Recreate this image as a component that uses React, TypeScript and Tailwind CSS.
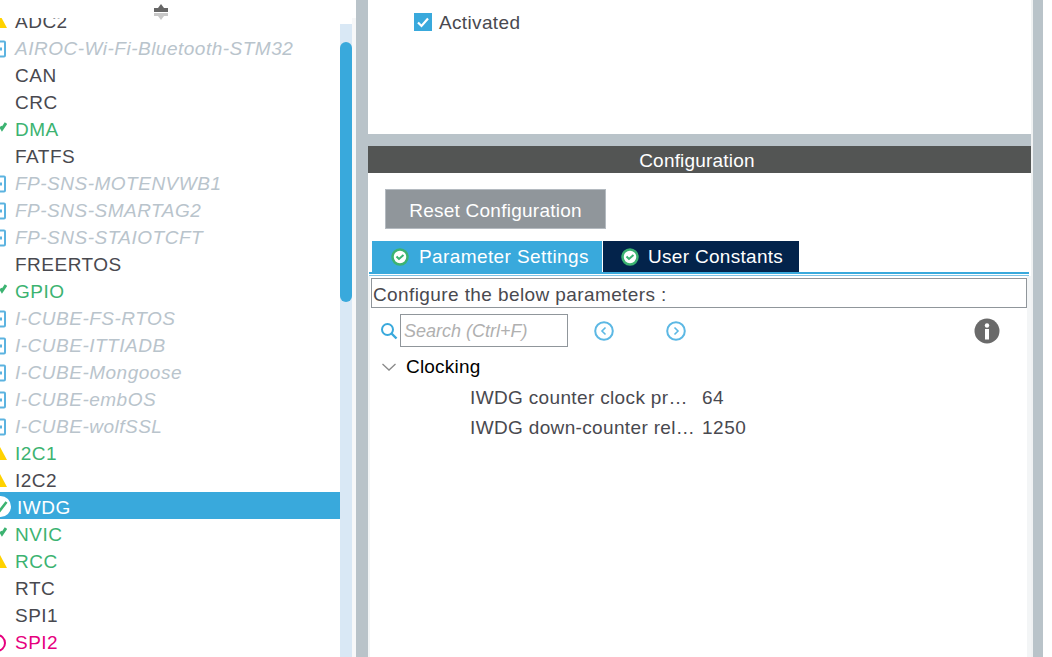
const rows = [
  { name: "AIROC-Wi-Fi-Bluetooth-STM32", kind: "pack" },
  { name: "CAN", kind: "plain" },
  { name: "CRC", kind: "plain" },
  { name: "DMA", kind: "ok" },
  { name: "FATFS", kind: "plain" },
  { name: "FP-SNS-MOTENVWB1", kind: "pack" },
  { name: "FP-SNS-SMARTAG2", kind: "pack" },
  { name: "FP-SNS-STAIOTCFT", kind: "pack" },
  { name: "FREERTOS", kind: "plain" },
  { name: "GPIO", kind: "ok" },
  { name: "I-CUBE-FS-RTOS", kind: "pack" },
  { name: "I-CUBE-ITTIADB", kind: "pack" },
  { name: "I-CUBE-Mongoose", kind: "pack" },
  { name: "I-CUBE-embOS", kind: "pack" },
  { name: "I-CUBE-wolfSSL", kind: "pack" },
  { name: "I2C1", kind: "warn" },
  { name: "I2C2", kind: "warnPlain" },
  { name: "IWDG", kind: "selected" },
  { name: "NVIC", kind: "ok" },
  { name: "RCC", kind: "warn" },
  { name: "RTC", kind: "plain" },
  { name: "SPI1", kind: "plain" },
  { name: "SPI2", kind: "error" },
];

function RowIcon({ kind }: { kind: string }) {
  if (kind === "pack") {
    return (
      <svg width="16" height="18" viewBox="0 0 16 18" className="shrink-0">
        <rect x="2" y="1.5" width="13" height="15" rx="1" fill="#fff" stroke="#5cb3e0" strokeWidth="2" />
        <rect x="9.5" y="7.5" width="2.5" height="3" fill="#5cb3e0" />
      </svg>
    );
  }
  if (kind === "ok") {
    return (
      <svg width="17" height="18" viewBox="0 0 17 18" className="shrink-0">
        <path d="M10.5 5.5 L12 8 L16 2" fill="none" stroke="#3cb371" strokeWidth="3" />
      </svg>
    );
  }
  if (kind === "warn" || kind === "warnPlain") {
    return (
      <svg width="17" height="18" viewBox="0 0 17 18" className="shrink-0">
        <path d="M9.5 1 L17 15 L2 15 Z" fill="#ffd200" />
      </svg>
    );
  }
  if (kind === "selected") {
    return (
      <svg width="21" height="23" viewBox="0 0 21 23" className="shrink-0">
        <circle cx="10.5" cy="10.5" r="10.5" fill="#fff" />
        <path d="M7 12 L9.5 15 L16.5 6" fill="none" stroke="#3cb371" strokeWidth="2.6" />
      </svg>
    );
  }
  if (kind === "error") {
    return (
      <svg width="16" height="20" viewBox="0 0 16 20" className="shrink-0">
        <circle cx="7" cy="10" r="8" fill="#fff" stroke="#e6007e" strokeWidth="2" />
      </svg>
    );
  }
  return <span className="w-[16px] shrink-0" />;
}

function rowText(kind: string) {
  if (kind === "pack") return "text-[#b9c4cc] italic";
  if (kind === "ok" || kind === "warn") return "text-[#3cb371]";
  if (kind === "error") return "text-[#e6007e]";
  if (kind === "selected") return "ml-[2px] text-white";
  return "text-[#49494f]";
}

function TabCheck() {
  return (
    <svg width="18" height="18" viewBox="0 0 18 18" className="shrink-0">
      <circle cx="9" cy="9" r="7.5" fill="#fff" stroke="#3cb371" strokeWidth="2.5" />
      <path d="M5.5 8.5 L8 11 L12.5 7" fill="none" stroke="#3cb371" strokeWidth="2" />
    </svg>
  );
}

function NavArrow({ dir }: { dir: "left" | "right" }) {
  return (
    <svg width="20" height="20" viewBox="0 0 20 20" className="shrink-0">
      <circle cx="10" cy="10" r="8.8" fill="none" stroke="#5cb8e4" strokeWidth="2" />
      <path d={dir === "left" ? "M11.5 6.5 L8 10 L11.5 13.5" : "M8.5 6.5 L12 10 L8.5 13.5"} fill="none" stroke="#5cb8e4" strokeWidth="1.6" />
    </svg>
  );
}

export default function App() {
  return (
    <div className="flex h-screen w-[1043px] overflow-hidden bg-[#b9c3c9] font-['Liberation_Sans',Arial,sans-serif] text-[19px] leading-[27px]">
      {/* peripheral list */}
      <div className="flex h-full w-[356px] shrink-0 flex-col bg-white">
        <div className="flex h-[18px] shrink-0 justify-center pt-[4px]">
          <svg width="14" height="17" viewBox="0 0 14 17" className="relative z-10 ml-[-34px] shrink-0">
            <path d="M7 0 L10 4 L14 4 L14 8 L0 8 L0 4 L4 4 Z" fill="#666" />
            <path d="M0 9 L14 9 L14 12 L10 12 L7 16 L4 12 L0 12 Z" fill="#c8c8c8" />
          </svg>
        </div>
        <div className="flex min-h-0 flex-1">
          <div className="min-w-0 flex-1 overflow-hidden">
            <div className="mt-[-12px]">
              <div className="flex h-[27px] items-center pt-[4px]">
                <div className="ml-[-10px] flex w-[25px] shrink-0">
                  <RowIcon kind="warn" />
                </div>
                <span className="text-[#49494f] tracking-[0.5px]">ADC2</span>
              </div>
              {rows.map((r) => (
                <div key={r.name} className={`flex h-[27px] items-center pt-[4px] ${r.kind === "selected" ? "bg-[#39a9dc]" : ""}`}>
                  <div className="ml-[-10px] flex w-[25px] shrink-0">
                    <RowIcon kind={r.kind} />
                  </div>
                  <span className={`${rowText(r.kind)} tracking-[0.5px] whitespace-nowrap`}>{r.name}</span>
                </div>
              ))}
            </div>
          </div>
          {/* scrollbar */}
          <div className="mt-[6px] w-[12px] shrink-0 bg-[#d9e8f5] pt-[18px]">
            <div className="h-[260px] rounded-[6px] bg-[#39a9dc]" />
          </div>
          <div className="w-[4px] shrink-0 bg-[#f7f8f9]" />
        </div>
      </div>

      <div className="w-[12px] shrink-0" />

      {/* right side */}
      <div className="flex h-full w-[663px] shrink-0 flex-col">
        <div className="flex h-[134px] shrink-0 items-start gap-[7px] bg-white pt-[9px] pl-[46px]">
          <div className="mt-[4px] flex h-[18px] w-[18px] items-center justify-center bg-[#39a9dc]">
            <svg width="14" height="14" viewBox="0 0 14 14">
              <path d="M2 7.5 L5.5 11 L12 3.5" fill="none" stroke="#fff" strokeWidth="2.2" />
            </svg>
          </div>
          <span className="text-[#49494f] tracking-[0.35px]">Activated</span>
        </div>
        <div className="h-[12px] shrink-0" />
        <div className="flex h-[27px] shrink-0 items-center justify-center bg-[#535554] pt-[2px] pr-[5px] text-white tracking-[0.2px]">
          Configuration
        </div>
        <div className="flex min-h-0 flex-1 flex-col bg-white">
          <div className="pt-[16px] pl-[17px]">
            <div className="flex h-[40px] w-[221px] items-center justify-center border border-[#b4bac0] bg-[#90969b] pt-[2px] text-white tracking-[0.25px]">
              Reset Configuration
            </div>
          </div>
          <div className="mt-[12px] ml-[4px] flex h-[31px] gap-[1px]">
            <div className="flex w-[230px] items-center gap-[10px] bg-[#39a9dc] pl-[19px] text-white tracking-[0.4px]">
              <TabCheck />
              Parameter Settings
            </div>
            <div className="flex w-[196px] items-center gap-[9px] bg-[#03234b] pl-[18px] text-white tracking-[0.3px]">
              <TabCheck />
              User Constants
            </div>
          </div>
          <div className="mr-[2px] ml-[1px] h-[4px] border-t-[2px] border-b border-t-[#39a9dc] border-b-[#7fc4e6] bg-white" />
          <div className="flex min-h-0 flex-1 flex-col border-r-[4px] border-l-[2px] border-r-[#f3f5f6] border-l-[#f3f5f6]">
            <div className="mt-[2px] ml-[1px] flex h-[30px] items-center border border-[#90969b] pt-[2px] pl-[1px] text-[#49494f] tracking-[0.4px]">
              Configure the below parameters :
            </div>
            <div className="mt-[6px] flex h-[33px] items-center">
              <svg width="18" height="18" viewBox="0 0 18 18" className="ml-[10px] shrink-0">
                <circle cx="7.5" cy="7.5" r="5.5" fill="none" stroke="#39a9dc" strokeWidth="2" />
                <path d="M11.5 11.5 L16.5 16.5" stroke="#39a9dc" strokeWidth="2.4" />
              </svg>
              <div className="ml-[2px] flex h-[33px] w-[168px] items-center border border-[#90969b] pt-[1px] pl-[3px] text-[18px] text-[#b0b0b0] italic">
                Search (Ctrl+F)
              </div>
              <div className="ml-[26px]">
                <NavArrow dir="left" />
              </div>
              <div className="ml-[52px]">
                <NavArrow dir="right" />
              </div>
              <svg width="26" height="26" viewBox="0 0 26 26" className="ml-[288px] shrink-0">
                <circle cx="13" cy="13" r="12.5" fill="#6a6a6a" />
                <circle cx="13" cy="7.5" r="2.2" fill="#fff" />
                <rect x="11" y="11" width="4" height="10.5" fill="#fff" />
              </svg>
            </div>
            <div className="mt-[6px] flex h-[27px] items-center">
              <svg width="16" height="10" viewBox="0 0 16 10" className="ml-[11px] shrink-0">
                <path d="M1.5 2 L8 8 L14.5 2" fill="none" stroke="#8a8a8a" strokeWidth="1.3" />
              </svg>
              <span className="ml-[9px] text-black tracking-[0.2px]">Clocking</span>
            </div>
            <div className="mt-[2px] flex h-[30px] items-center text-[#49494f] tracking-[0.35px]">
              <span className="ml-[100px] w-[232px] whitespace-nowrap">IWDG counter clock pr…</span>
              <span className="tracking-[0.5px]">64</span>
            </div>
            <div className="flex h-[30px] items-center text-[#49494f] tracking-[0.35px]">
              <span className="ml-[100px] w-[232px] whitespace-nowrap">IWDG down-counter rel…</span>
              <span className="tracking-[0.5px]">1250</span>
            </div>
          </div>
        </div>
      </div>
      <div className="w-[2px] shrink-0 bg-[#f0f2f3]" />
    </div>
  );
}
